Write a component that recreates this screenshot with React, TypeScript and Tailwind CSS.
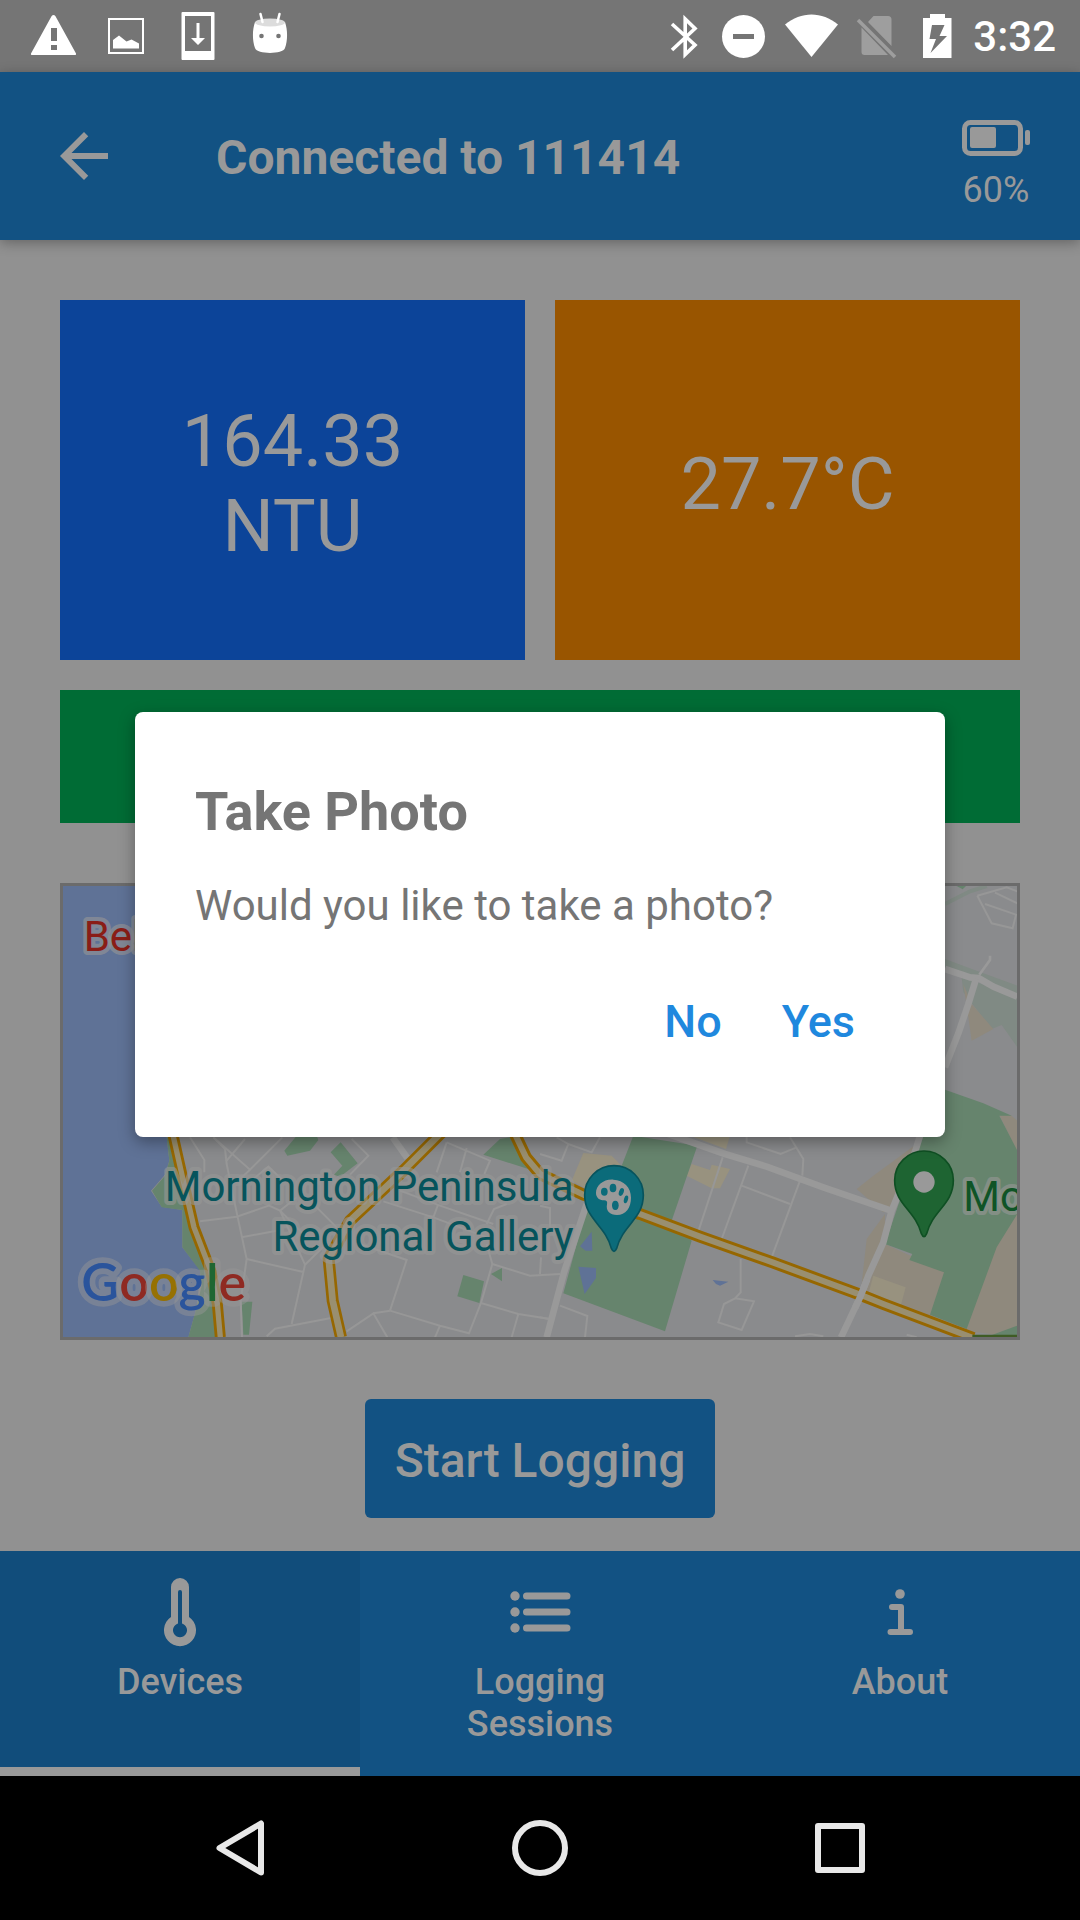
import type { ReactNode } from "react";

const roboto = { fontFamily: "Roboto, sans-serif" };

function StatusBar() {
  return (
    <div className="flex h-[72px] items-center justify-between bg-[#757575] text-white">
      <div className="flex pl-[18px]">
        <svg className="size-[72px]" viewBox="18 0 72 72" fill="currentColor" aria-hidden="true">
          <path
            fillRule="evenodd"
            d="M51.5 16.2q2-2.4 4 0L76 53.5q.6 1.5-1 1.5H32q-1.600 0-1-1.500zM51 28v13h6V28zM51 45v5h6v-5z"
          />
        </svg>
        <svg className="size-[72px]" viewBox="90 0 72 72" fill="currentColor" aria-hidden="true">
          <rect x="109" y="19" width="34" height="34" fill="none" stroke="currentColor" strokeWidth="2" />
          <path d="M113 48.500V40l6-4.500 7.500 6 5-2 7.500 4v5z" />
        </svg>
        <svg className="size-[72px]" viewBox="162 0 72 72" fill="currentColor" aria-hidden="true">
          <path fillRule="evenodd" d="M181.500 13q0-1 1-1h31q1 0 1 1v46q0 1-1 1h-31q-1 0-1-1zM185 16v35h26V16z" />
          <path d="M196.500 23h3v15h5.500l-7 7-7-7h5.500z" />
        </svg>
        <svg className="size-[72px]" viewBox="234 0 72 72" fill="currentColor" aria-hidden="true">
          <path d="M255 22c-3 9-2.500 19 0 26 2 6.500 28 6.500 30 0 2.500-7 3-17 0-26z" />
          <ellipse cx="270" cy="22.500" rx="15" ry="4" fill="#dcdcdc" />
          <path d="M260.500 14l2 8M279.500 14l-2 8" stroke="currentColor" strokeWidth="2.500" strokeLinecap="round" />
          <circle cx="261.500" cy="36" r="2.300" fill="#757575" />
          <circle cx="278.500" cy="36" r="2.300" fill="#757575" />
        </svg>
      </div>
      <div className="flex items-center pr-6">
        <svg className="h-[72px] w-[60px]" viewBox="654 0 60 72" fill="none" stroke="currentColor" strokeWidth="3.600" aria-hidden="true">
          <path d="M672 24l23 21-9.800 9.500V19l9.800 9.500L672 50" />
        </svg>
        <svg className="h-[72px] w-[60px]" viewBox="714 0 60 72" fill="currentColor" aria-hidden="true">
          <circle cx="743.500" cy="36.500" r="21.500" />
          <rect x="733" y="34" width="21" height="5" fill="#757575" />
        </svg>
        <svg className="h-[72px] w-[75px]" viewBox="774 0 75 72" fill="currentColor" aria-hidden="true">
          <path d="M785 24.500C801 11 822 11 838 24.500L811.500 57z" />
        </svg>
        <svg className="h-[72px] w-[56px]" viewBox="849 0 56 72" fill="#9e9e9e" aria-hidden="true">
          <path d="M861.500 27.500L888 55H864.500q-3 0-3-3zM868 22l5.500-6H888q3.500 0 3.500 3.500V46z" />
          <path d="M858 20l37 37" stroke="#9e9e9e" strokeWidth="3.500" />
        </svg>
        <svg className="h-[72px] w-[60px]" viewBox="905 0 60 72" fill="currentColor" aria-hidden="true">
          <path fillRule="evenodd" d="M923 18h7v-4h15v4h6.500v40H923zM932 25l-2.500 14h6.500l-5.500 14L947 36h-7.500l5-11z" />
        </svg>
        <time className="ml-2 pt-0.5 text-[42px] leading-[48px] font-medium">3:32</time>
      </div>
    </div>
  );
}

function Header() {
  return (
    <header className="relative flex h-[168px] items-start bg-[#125283] px-12 pt-12 text-[#999999] shadow-[0_3px_12px_rgba(0,0,0,0.3)]">
      <button type="button" aria-label="Back" className="size-[72px] shrink-0">
        <svg viewBox="0 0 24 24" fill="currentColor" className="size-full">
          <path d="M20 11H7.830l5.590-5.590L12 4l-8 8 8 8 1.410-1.410L7.830 13H20v-2z" />
        </svg>
      </button>
      <h1 className="ml-24 flex-1 text-[48px] leading-[76px] font-bold">Connected to 111414</h1>
      <div className="flex flex-col items-center gap-[13px]">
        <svg className="h-9 w-[72px]" viewBox="960 120 72 36" fill="currentColor" aria-hidden="true">
          <rect x="964.500" y="122.500" width="56" height="31" rx="6" fill="none" stroke="currentColor" strokeWidth="5" />
          <rect x="970" y="127" width="26" height="21" rx="2" />
          <rect x="1025" y="130" width="5" height="15" rx="2" />
        </svg>
        <span className="text-[36px] leading-[42px]">60%</span>
      </div>
    </header>
  );
}

function MapView() {
  return (
    <svg
      className="h-[451px] w-full"
      viewBox="39 46 2862 1353"
      preserveAspectRatio="xMidYMid slice"
      role="img"
      aria-label="Map"
    >
      <rect x="39" y="46" width="2862" height="1353" fill="#8a8b8d" />
      <path
        d="M39 46H340V700L350 800 358 870 345 912 303 960 335 1008 397 1018V1130L452 1200 440 1310 415 1400H39z"
        fill="#5f7296"
      />
      <g fill="#66846d">
        <path d="M350 800L372 800 410 960 440 1100 500 1200 505 1400H415L440 1310 455 1245 450 1200 397 1130V1018L335 1010 306 960 345 915 358 870z" />
        <path d="M703 840L740 795H800L805 808 780 840 712 855z" />
        <path d="M842 845L872 815 923 878 870 918 852 912 877 885z" />
        <path d="M1300 852L1350 805 1380 800 1435 895z" />
        <path d="M1240 1213L1302 1232 1288 1297 1222 1277z" />
        <path d="M1323 1210L1356 1192V1232z" />
        <path d="M575 1293H607L597 1392H580z" />
      </g>
      <g fill="none" stroke="#979797" strokeWidth="6">
        <path d="M420 800L463 868V905M490 800L525 835 530 880 562 1035 590 1165 572 1290 576 1400" />
        <path d="M490 800L600 897 697 800M530 870L585 805M600 897L570 925M610 925L655 888 700 930" />
        <path d="M450 1052L560 1038 657 1005 690 1020 770 1100M690 1020L765 1182 725 1360M690 1020L740 980M765 1182L820 1128M590 1165L760 1204" />
        <path d="M575 1100L680 1080M800 1010L860 1070M905 805L955 855 900 912M650 1397L675 1374 855 1340M890 1382L970 1328 1012 1400" />
        <path d="M970 1328L1020 1320 1170 1365 1257 1388 1293 1297 1405 1330 1500 1345M1170 1365L1155 1400M1405 1330L1385 1400" />
        <path d="M1020 1320L1070 1168 930 1120M1293 1297L1327 1180 1310 1120M1327 1180L1440 1215 1530 1210M1470 1210L1473 1160" />
        <path d="M1190 815L1160 905M1190 815L1320 870 1303 910M1250 832L1230 905M1000 992L1150 1040 1310 1100M1050 960L1170 1005 1330 1060M1150 1040L1165 1000M1310 1060L1332 1015 1370 1000" />
      </g>
      <path d="M1028 800L1072 862" stroke="#999999" strokeWidth="20" />
      <g transform="translate(1470 0)">
        <g fill="#98927f">
          <path d="M130 847L215 855 245 885 150 960 95 930z" />
          <path d="M455 880L510 898 515 882 570 895 540 953 515 953 440 915z" />
          <path d="M450 795H570L558 835z" />
        </g>
        <g fill="#8f897d">
          <path d="M1130 820L1000 915 950 955 1030 1025 1055 1020z" />
          <path d="M1035 1030L980 1105 965 1240 975 1280 1170 1335 1220 1205 1100 1150 1035 1120z" />
          <path d="M1432 1000L1370 1120 1275 1380 1432 1400z" />
          <path d="M1378 732L1412 733 1432 750V845z" />
        </g>
        <path d="M1000 1215L1097 1250 1083 1302 985 1270z" fill="#98927f" />
        <path d="M1265 320L1432 375V530L1385 463 1355 475 1270 365z" fill="#808a84" />
        <path d="M1215 265L1310 300 1432 345V370L1310 325 1215 290z" fill="#808a84" />
        <path d="M1270 340L1295 400 1360 475 1295 510 1285 440z" fill="#8f897d" />
        <path d="M1215 100L1290 62 1340 46" fill="none" stroke="#808a84" strokeWidth="12" />
        <g fill="#66846d">
          <path d="M280 795L472 825 395 1050 455 1110 375 1382 70 1268 140 1010 245 885z" />
          <path d="M1215 657L1330 698 1415 735 1378 735 1432 840V1030L1370 1130 1280 1375 1170 1332 1212 1205 1108 1168 1117 1150 1035 1120 1120 870 1145 795z" />
          <path d="M1432 1365L1390 1380 1350 1395H1432z" />
          <path d="M1250 46H1278L1268 56z" />
        </g>
        <g fill="#5f7296">
          <path d="M155 1083L157 1140H137L120 1127z" />
          <path d="M115 1188L168 1192V1222L134 1270z" />
          <path d="M518 1228L565 1233 540 1245 528 1240z" />
        </g>
        <g fill="none" stroke="#979797" strokeWidth="6">
          <path d="M548 860L475 1082M625 885L545 1105M605 945L750 1000M780 930L695 1160M750 800L790 865 787 915M620 795V815L722 850 770 830" />
          <path d="M602 1165V1265L585 1283 552 1300 535 1355 605 1378 642 1292 585 1283M60 1305L142 1336 135 1400M180 800L155 845 85 820 65 870 0 850M50 800L85 820" />
          <path d="M0 1005L30 1012V1070M0 1340L25 1345M765 1397L810 1390 850 1397M1100 1392L1130 1400" />
          <path d="M1312 75L1400 50 1432 62M1312 75L1355 158 1418 173 1428 132 1335 100M1365 66L1432 98" />
        </g>
        <g fill="none" stroke="#999999" strokeWidth="20" strokeLinejoin="round">
          <path d="M385 790L555 850 680 888 850 950 1060 1022" />
          <path d="M1140 795L1120 860 1055 1020 1030 1115 985 1215 960 1280 903 1400" />
          <path d="M140 1000L72 1205 20 1400" />
          <path d="M1215 295L1290 320 1315 322 1360 348 1432 378" />
          <path d="M1308 325L1285 400 1255 488 1215 590" />
          <path d="M1318 312L1350 268V255" strokeWidth="8" />
        </g>
      </g>
      <g fill="none" strokeLinejoin="round">
        <g stroke="#966700" strokeWidth="36">
          <path d="M366 780L402 940 432 1070 482 1200 502 1300 511 1400" strokeWidth="33" />
          <path d="M1180 780L1060 900 900 1050 836 1165 848 1290 873 1400" />
          <path d="M1390 780L1428 860 1470 910 1600 972 1770 1030 1950 1098 2170 1176 2420 1268 2500 1300 2770 1402" />
        </g>
        <g stroke="#998f70" strokeWidth="18">
          <path d="M366 780L402 940 432 1070 482 1200 502 1300 511 1400" strokeWidth="16" />
          <path d="M1180 780L1060 900 900 1050 836 1165 848 1290 873 1400" strokeWidth="20" />
          <path d="M1390 780L1428 860 1470 910 1600 972 1770 1030 1950 1098 2170 1176 2420 1268 2500 1300 2770 1402" />
        </g>
      </g>
      <path d="M2452 1225L2430 1280 2415 1312" stroke="#999999" strokeWidth="20" fill="none" />
      <path d="M2767 1392H2902V1400H2767z" fill="#3f5c25" />

      <path
        d="M1604 973a88 88 0 0 1 176 0c0 72-62 90-80 160q-8 18-16 0c-18-70-80-88-80-160z"
        fill="#0b6b7a"
        stroke="#07535d"
        strokeWidth="5"
      />
      <path
        d="M1690 927c-30-2-52 18-52 40 0 14 10 22 24 22 8 0 11 4 9 12-4 20 8 32 30 32 26 0 42-22 42-52 0-32-22-52-53-54z"
        fill="#999999"
      />
      <g fill="#0b6b7a">
        <ellipse cx="1663" cy="963" rx="10" ry="12" />
        <ellipse cx="1689" cy="952" rx="10" ry="13" />
        <ellipse cx="1714" cy="964" rx="7" ry="12" transform="rotate(20 1714 964)" />
        <ellipse cx="1728" cy="986" rx="6" ry="12" transform="rotate(15 1728 986)" />
        <ellipse cx="1696" cy="1004" rx="10" ry="14" />
      </g>
      <path
        d="M2534 929a88 88 0 0 1 176 0c0 72-62 90-80 160q-8 18-16 0c-18-70-80-88-80-160z"
        fill="#1e6432"
        stroke="#0f4f23"
        strokeWidth="5"
      />
      <circle cx="2622" cy="934" r="32" fill="#999999" />

      <g
        fontSize="126"
        fontFamily="Roboto, sans-serif"
        stroke="#979797"
        strokeOpacity="0.6"
        strokeWidth="24"
        strokeLinejoin="round"
        paintOrder="stroke"
      >
        <text x="101" y="240" fill="#8a1d17">Bel</text>
        <text x="1571" y="992" textAnchor="end" fill="#06545c">Mornington Peninsula</text>
        <text x="1571" y="1140" textAnchor="end" fill="#06545c">Regional Gallery</text>
        <text x="2740" y="1020" fill="#0f5426">Mo</text>
      </g>
      <text
        x="94"
        y="1291"
        fontSize="156"
        fontWeight="600"
        fontFamily="Lato, sans-serif"
        stroke="#979797"
        strokeOpacity="0.45"
        strokeWidth="34"
        strokeLinejoin="round"
        paintOrder="stroke"
      >
        <tspan fill="#2a549c">G</tspan>
        <tspan fill="#8f2a22">o</tspan>
        <tspan fill="#967103">o</tspan>
        <tspan fill="#2a549c">g</tspan>
        <tspan fill="#1f6632">l</tspan>
        <tspan fill="#8f2a22">e</tspan>
      </text>
    </svg>
  );
}

function Tab({ label, active, children }: { label: string; active?: boolean; children: ReactNode }) {
  return (
    <button
      type="button"
      role="tab"
      aria-selected={!!active}
      className={
        active
          ? "flex flex-1 flex-col items-center gap-[13px] border-b-9 border-[#999999] bg-[#114d7b] px-16 pt-[25px]"
          : "flex flex-1 flex-col items-center gap-[13px] px-16 pt-[25px] pb-[31px]"
      }
    >
      <svg className="size-[72px]" viewBox="0 0 72 72" fill="currentColor" aria-hidden="true">
        {children}
      </svg>
      <span className="text-[36px] leading-[42px] font-medium">{label}</span>
    </button>
  );
}

function TabBar() {
  return (
    <nav className="flex min-h-[225px] bg-[#125283] text-[#999999]" role="tablist">
      <Tab label="Devices" active>
        <path
          fillRule="evenodd"
          d="M27 11a9 9 0 0 1 18 0V41a16 16 0 1 1-18 0zM34 16V47.500a7 7 0 1 0 4 0V16a2 2 0 0 0-4 0z"
        />
      </Tab>
      <Tab label="Logging Sessions">
        <circle cx="11" cy="20" r="4.700" />
        <circle cx="11" cy="36" r="4.700" />
        <circle cx="11" cy="52" r="4.700" />
        <path d="M22.500 20H63M22.500 36H63M22.500 52H63" stroke="currentColor" strokeWidth="7" strokeLinecap="round" />
      </Tab>
      <Tab label="About">
        <circle cx="36" cy="18" r="4.800" />
        <path
          d="M28 31H37V56M26.500 56H46"
          fill="none"
          stroke="currentColor"
          strokeWidth="6"
          strokeLinecap="round"
          strokeLinejoin="round"
        />
      </Tab>
    </nav>
  );
}

function SystemNav() {
  return (
    <div className="flex h-36 items-center bg-black px-[90px] text-[#e8e8e8]">
      <button type="button" aria-label="System back" className="flex flex-1 justify-center">
        <svg className="size-[72px]" viewBox="0 0 72 72" fill="none" stroke="currentColor" strokeWidth="6" strokeLinejoin="round">
          <path d="M15.500 36L57 11.500V60.500z" />
        </svg>
      </button>
      <button type="button" aria-label="Home" className="flex flex-1 justify-center">
        <svg className="size-[72px]" viewBox="0 0 72 72" fill="none" stroke="currentColor" strokeWidth="6">
          <circle cx="36" cy="36" r="25" />
        </svg>
      </button>
      <button type="button" aria-label="Recent apps" className="flex flex-1 justify-center">
        <svg className="size-[72px]" viewBox="0 0 72 72" fill="none" stroke="currentColor" strokeWidth="6" strokeLinejoin="round">
          <rect x="14" y="14" width="44" height="44" />
        </svg>
      </button>
    </div>
  );
}

function PhotoDialog() {
  return (
    <div className="absolute inset-0 flex items-center justify-center">
      <div
        role="dialog"
        aria-modal="true"
        aria-labelledby="photo-title"
        className="w-3/4 rounded-lg bg-white px-[60px] pt-[67px] pb-[84px] text-[#757575] shadow-[0_5px_16px_rgba(0,0,0,0.35)]"
      >
        <h2 id="photo-title" className="text-[54px] leading-[66px] font-bold">
          Take Photo
        </h2>
        <p className="mt-[34px] text-[42px] leading-[54px]">Would you like to take a photo?</p>
        <div className="mt-[57px] flex justify-end gap-[60px] pr-[30px] text-[45px] leading-[63px] font-medium text-[#1f88de]">
          <button type="button">No</button>
          <button type="button">Yes</button>
        </div>
      </div>
    </div>
  );
}

export default function App() {
  return (
    <div className="flex min-h-screen flex-col bg-[#919191]" style={roboto}>
      <StatusBar />
      <div className="relative flex flex-1 flex-col">
        <Header />
        <main className="flex flex-1 flex-col px-[60px] pt-[60px] text-[#999999]">
          <div className="grid grid-cols-2 gap-[30px] text-center text-[72px] leading-[85px]">
            <div className="flex min-h-[360px] items-center justify-center bg-[#0c4499] px-24 pt-2">164.33 NTU</div>
            <div className="flex min-h-[360px] items-center justify-center bg-[#995500] px-24 pt-2">27.7°C</div>
          </div>
          <div className="mt-[30px] h-[133px] bg-[#006c35]" />
          <div className="mt-[60px] border-3 border-[#6b6b6b]">
            <MapView />
          </div>
          <button
            type="button"
            className="mt-[59px] mb-[33px] self-center rounded-md bg-[#125283] px-[30px] pt-[30px] pb-[26px] text-[48px] leading-[63px] font-medium"
          >
            Start Logging
          </button>
        </main>
        <TabBar />
        <PhotoDialog />
      </div>
      <SystemNav />
    </div>
  );
}
